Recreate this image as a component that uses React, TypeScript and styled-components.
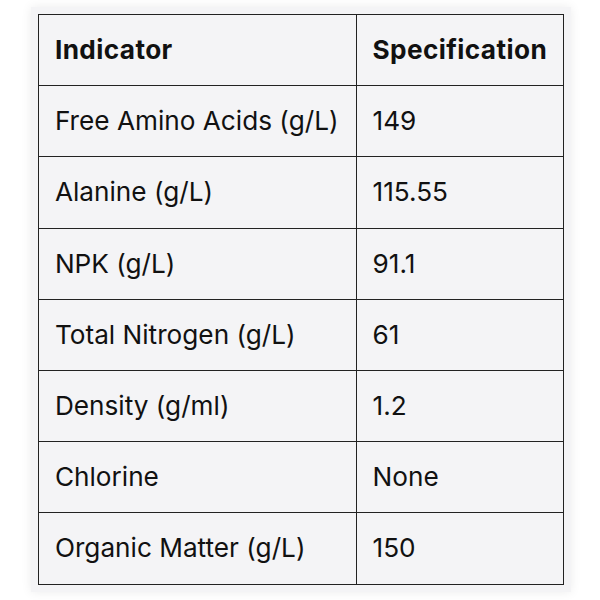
import React from "react";
import styled, { createGlobalStyle } from "styled-components";

const GlobalStyle = createGlobalStyle`
  html, body {
    margin: 0;
    padding: 0;
    background: #ffffff;
  }
  body {
    font-family: "Inter", "Liberation Sans", Arial, sans-serif;
  }
`;

const Page = styled.div`
  width: 600px;
  height: 600px;
  display: flex;
  justify-content: center;
  align-items: flex-start;
  padding-top: 7px;
  padding-left: 2px;
  box-sizing: border-box;
`;

const Card = styled.div`
  background: #f4f4f6;
  padding: 7px;
  box-shadow: 0 0 10px rgba(0, 0, 0, 0.08);
`;

const Table = styled.table`
  border-collapse: collapse;
  border: 1.5px solid #222;
  color: #111;
  font-family: "Inter", "Liberation Sans", Arial, sans-serif;
  font-size: 26.2px;
  line-height: 38.2px;
`;

const HeadCell = styled.th`
  text-align: left;
  font-weight: 700;
  letter-spacing: 0.4px;
  padding: 16px 16px;
  border: 1.5px solid #222;
  white-space: nowrap;
`;

const Cell = styled.td<{ $wide?: boolean }>`
  text-align: left;
  font-weight: 400;
  padding: 16px ${(p) => (p.$wide ? 17 : 16)}px 16px 16px;
  border: 1.5px solid #222;
  white-space: nowrap;
`;

const rows: [string, string][] = [
  ["Free Amino Acids (g/L)", "149"],
  ["Alanine (g/L)", "115.55"],
  ["NPK (g/L)", "91.1"],
  ["Total Nitrogen (g/L)", "61"],
  ["Density (g/ml)", "1.2"],
  ["Chlorine", "None"],
  ["Organic Matter (g/L)", "150"],
];

export default function App() {
  return (
    <>
      <GlobalStyle />
      <Page>
        <Card>
          <Table>
            <thead>
              <tr>
                <HeadCell>Indicator</HeadCell>
                <HeadCell>Specification</HeadCell>
              </tr>
            </thead>
            <tbody>
              {rows.map(([k, v]) => (
                <tr key={k}>
                  <Cell $wide>{k}</Cell>
                  <Cell>{v}</Cell>
                </tr>
              ))}
            </tbody>
          </Table>
        </Card>
      </Page>
    </>
  );
}
